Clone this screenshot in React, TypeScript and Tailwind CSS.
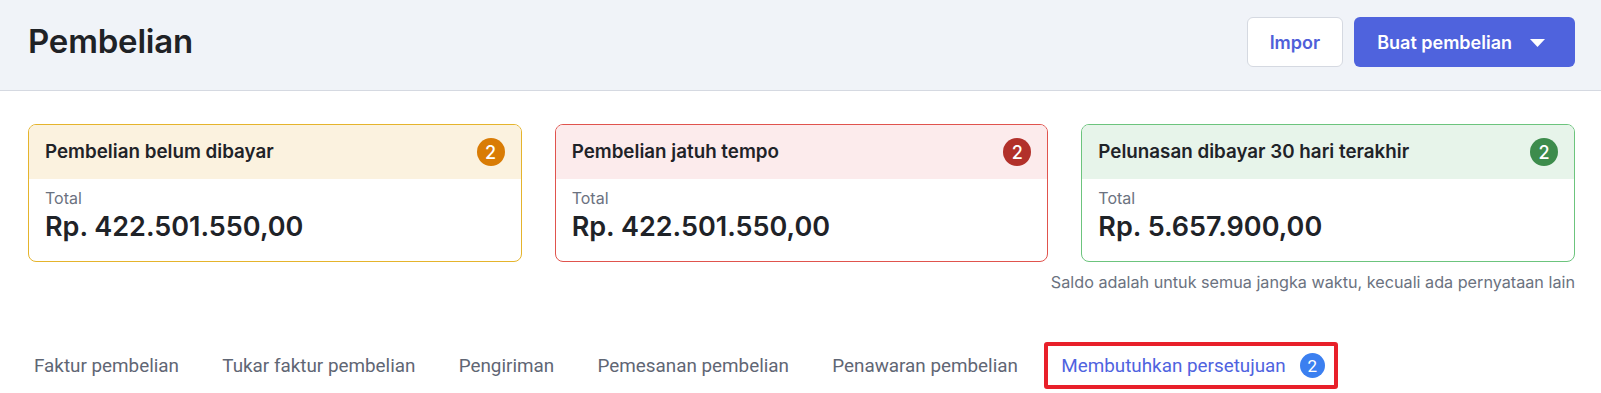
import React from 'react';

const CARDS = [
  {
    title: 'Pembelian belum dibayar',
    amount: 'Rp. 422.501.550,00',
    border: 'border-[#e5b42c]',
    head: 'bg-[#fbf2df]',
    badge: 'bg-[#d97c05]',
  },
  {
    title: 'Pembelian jatuh tempo',
    amount: 'Rp. 422.501.550,00',
    border: 'border-[#e0534d]',
    head: 'bg-[#fcebec]',
    badge: 'bg-[#b2302a]',
  },
  {
    title: 'Pelunasan dibayar 30 hari terakhir',
    amount: 'Rp. 5.657.900,00',
    border: 'border-[#6cc47d]',
    head: 'bg-[#e7f4ea]',
    badge: 'bg-[#3d8c4c]',
  },
];

const TABS = [
  'Faktur pembelian',
  'Tukar faktur pembelian',
  'Pengiriman',
  'Pemesanan pembelian',
  'Penawaran pembelian',
];

export default function App() {
  return (
    <div className="w-[1601px] h-[393px] bg-white font-['Inter',sans-serif] overflow-hidden">
      {/* Page header */}
      <header className="h-[91px] bg-[#f0f3f8] border-b border-[#d5d9e1] flex items-center justify-between pl-[28px] pr-[26px] pb-[6px]">
        <h1 className="text-[33px] font-semibold text-[#1f2226] tracking-[-0.2px]">Pembelian</h1>
        <div className="flex items-center gap-[11px]">
          <button className="h-[50px] px-[22px] bg-white border border-[#d5d9e1] rounded-[6px] text-[18px] font-semibold text-[#4f5fd9]">
            Impor
          </button>
          <button className="h-[50px] pl-[23px] pr-[30px] bg-[#4f63dd] rounded-[6px] text-[18px] font-semibold text-white flex items-center gap-[18px]">
            Buat pembelian
            <svg width="15" height="8" viewBox="0 0 15 8" className="mt-[1px]">
              <path d="M0 0 L15 0 L7.5 8 Z" fill="white" />
            </svg>
          </button>
        </div>
      </header>

      {/* Summary cards */}
      <section className="pt-[33px] pl-[28px] pr-[26px]">
        <div className="grid grid-cols-3 gap-[33px]">
          {CARDS.map((c) => (
            <div key={c.title} className={`border ${c.border} rounded-[8px] overflow-hidden`}>
              <div className={`${c.head} h-[54px] px-[16px] flex items-center justify-between`}>
                <span className="text-[18.8px] font-semibold text-[#1f2328]">{c.title}</span>
                <span className={`${c.badge} w-[28px] h-[28px] rounded-full text-white text-[18px] font-medium flex items-center justify-center`}>
                  2
                </span>
              </div>
              <div className="pt-[9px] pb-[18px] px-[16px]">
                <div className="text-[16px] leading-[20px] text-[#6b7280]">Total</div>
                <div className="mt-[3px] text-[27px] leading-[32px] font-semibold text-[#1f2328]">{c.amount}</div>
              </div>
            </div>
          ))}
        </div>
        <p className="mt-[10px] text-right text-[16.2px] leading-[20px] text-[#6b7280]">
          Saldo adalah untuk semua jangka waktu, kecuali ada pernyataan lain
        </p>
      </section>

      {/* Tabs */}
      <nav className="mt-[61px] pl-[34px] flex items-center gap-[43.3px] font-['Roboto',sans-serif] text-[18.85px] leading-[24px] text-[#5f6674]">
        {TABS.map((t) => (
          <span key={t}>{t}</span>
        ))}
        <span className="relative flex items-center gap-[14px] text-[#4f63e0]">
          Membutuhkan persetujuan
          <span className="w-[25px] h-[25px] rounded-full bg-[#3b7ff0] text-white text-[17px] flex items-center justify-center">
            2
          </span>
          <span className="absolute left-[-17px] right-[-13px] top-[-11px] bottom-[-11px] border-[4px] border-[#e8202a] rounded-[3px] pointer-events-none" />
        </span>
      </nav>
    </div>
  );
}
